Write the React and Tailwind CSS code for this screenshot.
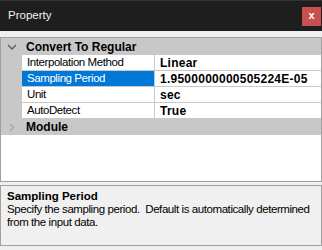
import { useState } from 'react'

const rows = [
  { name: 'Interpolation Method', value: 'Linear' },
  { name: 'Sampling Period', value: '1.9500000000505224E-05' },
  { name: 'Unit', value: 'sec' },
  { name: 'AutoDetect', value: 'True' },
]

// small chevrons used by the category rows
function Chevron({ open }) {
  return open ? (
    <svg width="10" height="6" viewBox="0 0 10 6" className="shrink-0">
      <path d="M1 1 L5 5 L9 1" fill="none" stroke="#5e5e5e" strokeWidth="1.4" />
    </svg>
  ) : (
    <svg width="6" height="9" viewBox="0 0 6 9" className="shrink-0">
      <path d="M1 1 L4.5 4.5 L1 8" fill="none" stroke="#a6a6a6" strokeWidth="1.4" />
    </svg>
  )
}

export default function App() {
  const [selected] = useState('Sampling Period')

  return (
    <div className="w-[322px] h-[250px] bg-[#f0f0f0] flex flex-col text-[11.5px] tracking-[-0.42px] text-black font-['Liberation_Sans',Arial,sans-serif]">
      {/* Title bar */}
      <div className="h-[31px] bg-[#1f1e1e] border-t border-[#353535] flex items-center justify-between pl-2 pr-[1px] shrink-0">
        <span className="text-[11.5px] tracking-normal text-[#f2f2f2] pb-[1px]">Property</span>
        <div className="w-[19px] h-[19px] bg-[#c75050] flex items-center justify-center text-white text-[11px] tracking-normal font-bold leading-none pb-[2px]">x</div>
      </div>
      <div className="h-[6px] shrink-0" />

      {/* Grid */}
      <div className="h-[145px] border border-[#a0a0a0] bg-white flex flex-col shrink-0">
        <div className="h-[17px] bg-[#c8c8c8] flex items-center shrink-0">
          <div className="w-[21px] flex justify-center pt-[1px]"><Chevron open /></div>
          <span className="font-bold text-[12px] tracking-normal pl-[4px]">Convert To Regular</span>
        </div>
        {rows.map((r) => (
          <div key={r.name} className="h-[16px] flex shrink-0">
            <div className="w-[21px] bg-[#c8c8c8]" />
            <div className="flex-1 flex border-b border-[#c8c8c8]">
              <div className={`w-[133px] border-r border-[#c8c8c8] pl-[5px] flex items-center ${r.name === selected ? 'bg-[#0078d7] text-white' : ''}`}>
                {r.name}
              </div>
              <div className="flex-1 pl-[5px] flex items-center font-bold text-[12px] tracking-[0.25px]">{r.value}</div>
            </div>
          </div>
        ))}
        <div className="h-[16px] bg-[#c8c8c8] flex items-center shrink-0">
          <div className="w-[21px] flex justify-center"><Chevron /></div>
          <span className="font-bold text-[12px] tracking-normal pl-[4px]">Module</span>
        </div>
      </div>

      <div className="h-[3px] shrink-0" />

      {/* Description */}
      <div className="h-[61px] border border-[#a0a0a0] bg-[#f0f0f0] px-[6px] pt-[3px] leading-[13px] shrink-0">
        <div className="font-bold text-[11.5px] tracking-normal leading-[14px]">Sampling Period</div>
        <div>Specify the sampling period.&nbsp; Default is automatically determined from the input data.</div>
      </div>
    </div>
  )
}
